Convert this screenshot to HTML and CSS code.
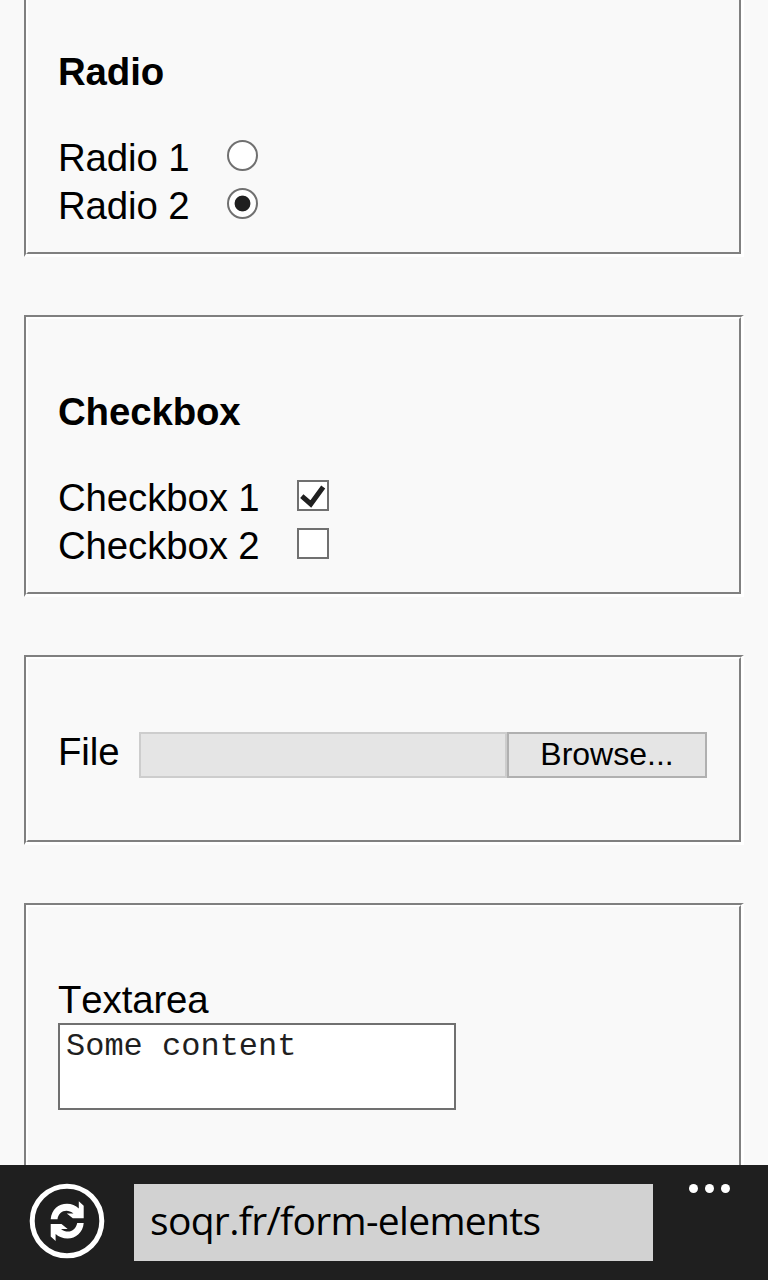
FILE: index.html
```html
<!DOCTYPE html>
<html lang="en">
<head>
<meta charset="utf-8">
<title>Form elements</title>
<link rel="stylesheet" href="styles.css">
</head>
<body>
<main class="page">
  <section class="group group-radio"><div class="group-inner">
    <h2 class="heading">Radio</h2>
    <label class="row row-radio"><span>Radio 1</span><span class="radio"></span></label>
    <label class="row row-radio"><span>Radio 2</span><span class="radio radio-on"></span></label>
  </div></section>
  <section class="group group-check"><div class="group-inner">
    <h2 class="heading">Checkbox</h2>
    <label class="row row-check"><span>Checkbox 1</span><span class="check"><svg class="tick" viewBox="0 0 28 27"><path d="M2.800 14.200 11.800 22 24.200 5" fill="none" stroke="#1f1f1f" stroke-width="5"/></svg></span></label>
    <label class="row row-check"><span>Checkbox 2</span><span class="check"></span></label>
  </div></section>
  <section class="group group-file"><div class="group-inner">
    <div class="file-row"><span class="file-label">File</span><span class="file-field"></span><button class="browse" type="button">Browse...</button></div>
  </div></section>
  <section class="group group-text"><div class="group-inner">
    <label class="row" for="content">Textarea</label>
    <textarea class="area" id="content" spellcheck="false">Some content</textarea>
  </div></section>
</main>
<footer class="bar">
  <svg class="refresh" viewBox="0 0 76 76">
    <circle cx="38" cy="38" r="34.8" fill="none" stroke="#fff" stroke-width="5"/>
    <path fill="#fff" d="M21.700 36.300C22.500 26.500 29.500 20.800 38 20.800C42.500 20.800 46.800 22.500 49.800 25.500V18.300L54.700 22.800V35.300H43.800L37.800 30.500H44.500C37.500 25 29.500 28.500 28.500 36.300Z"/>
    <path fill="#fff" d="M54.700 40C53.900 49.500 47 55.500 38.500 55.500C34 55.500 29.800 53.800 26.600 51V58L21.700 53.500V41H32.500L38.700 46H32C39 51.300 46.800 47.800 48.200 40Z"/>
  </svg>
  <div class="address">soqr.fr/form-elements</div>
  <div class="more"><i class="dot"></i><i class="dot"></i><i class="dot"></i></div>
</footer>
</body>
</html>
```
FILE: styles.css
```css
* { box-sizing: border-box; }
body {
  margin: 0;
  width: 768px;
  height: 1280px;
  overflow: hidden;
  display: flex;
  flex-direction: column;
  background: #f9f9f9;
  color: #000;
  font: 38.4px/48px "Liberation Sans", Arial, sans-serif;
  font-kerning: none;
  letter-spacing: -0.12px;
}
.page {
  height: 1165px;
  flex: none;
  overflow: hidden;
  padding: 0 24px;
  display: flex;
  flex-direction: column;
}
.group {
  flex: none;
  width: 720px;
  border: 2px solid #808080;
  border-right: 3px solid #fff;
  border-bottom: 3px solid #fff;
}
.group-inner {
  height: 100%;
  border: 2px solid #fff;
  border-right-color: #808080;
  border-bottom-color: #808080;
  padding: 0 31px 0 30px;
}
.group-radio { height: 257px; border-top: 0; margin-bottom: 58px; }
.group-radio .group-inner { border-top: 0; padding-top: 48px; }
.group-check { height: 282px; margin-bottom: 58px; }
.group-check .group-inner { padding-top: 69px; }
.group-file { height: 190px; margin-bottom: 58px; }
.group-file .group-inner { padding-top: 69px; }
.group-text { height: 290px; }
.group-text .group-inner { padding-top: 69px; }
.heading { margin: 0 0 38px; font-size: 38.4px; line-height: 48px; font-weight: 700; }
.row { display: flex; height: 48px; }
.row-radio > span:first-child { width: 169px; }
.row-check > span:first-child { width: 239px; }
.radio {
  width: 31px;
  height: 31px;
  margin-top: 6px;
  border: 2.4px solid #707070;
  border-radius: 50%;
  background: #fff;
}
.radio-on { background: radial-gradient(circle, #1f1f1f 7.5px, #fff 8.3px); }
.check {
  width: 32px;
  height: 31px;
  margin-top: 6px;
  border: 2px solid #707070;
  background: #fff;
}
.tick { display: block; width: 28px; height: 27px; }
.file-row { display: flex; }
.file-label { width: 81px; }
.file-field, .browse {
  flex: none;
  height: 46px;
  margin-top: 4px;
  border: 2px solid #cdcdcd;
  background: #e5e5e5;
}
.file-field { width: 368px; }
.browse {
  width: 200px;
  padding: 0 0 2px;
  border-color: #b0b0b0;
  color: #000;
  font: 32px/40px "Liberation Sans", Arial, sans-serif;
}
.area {
  display: block;
  width: 398px;
  height: 87px;
  border: 2px solid #707070;
  border-radius: 0;
  padding: 4px 6px;
  margin: -1px 0 0;
  resize: none;
  overflow: hidden;
  background: #fff;
  color: #1f1f1f;
  font: 32px/36px "Liberation Mono", "Courier New", monospace;
}
.bar {
  flex: none;
  height: 115px;
  display: flex;
  align-items: flex-start;
  background: #1f1f1f;
}
.refresh { width: 76px; height: 76px; margin: 18px 0 0 29px; }
.address {
  width: 519px;
  height: 77px;
  margin: 19px 0 0 29px;
  padding-left: 16px;
  background: #d2d2d2;
  font: 39px/71px "Open Sans", "Noto Sans", sans-serif;
  letter-spacing: -0.68px;
  white-space: nowrap;
}
.more { display: flex; gap: 7px; margin: 19px 0 0 36px; }
.dot { width: 9px; height: 9px; border-radius: 50%; background: #fff; }
```
